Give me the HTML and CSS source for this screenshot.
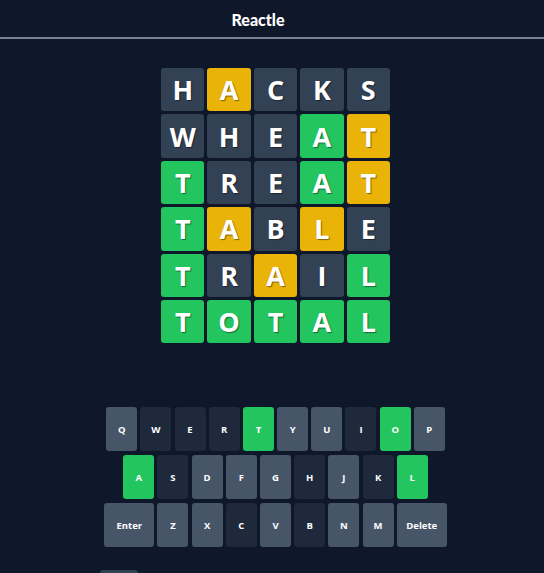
FILE: index.html
```html
<!DOCTYPE html>
<html lang="en">
<head>
<meta charset="utf-8">
<title>Reactle</title>
<link rel="stylesheet" href="styles.css">
</head>
<body>
<header class="header">
  <h1 class="title">Reactle</h1>
</header>
<main class="main">
  <div class="grid">
    <div class="tile absent">H</div><div class="tile present">A</div><div class="tile absent">C</div><div class="tile absent">K</div><div class="tile absent">S</div>
    <div class="tile absent">W</div><div class="tile absent">H</div><div class="tile absent">E</div><div class="tile correct">A</div><div class="tile present">T</div>
    <div class="tile correct">T</div><div class="tile absent">R</div><div class="tile absent">E</div><div class="tile correct">A</div><div class="tile present">T</div>
    <div class="tile correct">T</div><div class="tile present">A</div><div class="tile absent">B</div><div class="tile present">L</div><div class="tile absent">E</div>
    <div class="tile correct">T</div><div class="tile absent">R</div><div class="tile present">A</div><div class="tile absent">I</div><div class="tile correct">L</div>
    <div class="tile correct">T</div><div class="tile correct">O</div><div class="tile correct">T</div><div class="tile correct">A</div><div class="tile correct">L</div>
  </div>
  <div class="keyboard">
    <div class="krow">
      <button class="key">Q</button><button class="key used">W</button><button class="key used">E</button><button class="key used">R</button><button class="key hit">T</button><button class="key">Y</button><button class="key">U</button><button class="key used">I</button><button class="key hit">O</button><button class="key">P</button>
    </div>
    <div class="krow">
      <button class="key hit">A</button><button class="key used">S</button><button class="key">D</button><button class="key">F</button><button class="key">G</button><button class="key used">H</button><button class="key">J</button><button class="key used">K</button><button class="key hit">L</button>
    </div>
    <div class="krow">
      <button class="key wide">Enter</button><button class="key">Z</button><button class="key">X</button><button class="key used">C</button><button class="key">V</button><button class="key used">B</button><button class="key">N</button><button class="key">M</button><button class="key wide">Delete</button>
    </div>
  </div>
  <div class="footer">
    <div class="peek"></div>
  </div>
</main>
</body>
</html>
```
FILE: styles.css
```css
html {
  overflow: hidden;
}
body {
  margin: 0;
  background: #0f172a;
  font-family: Lato, "Open Sans", sans-serif;
  color: #ffffff;
}
.header {
  height: 37px;
  border-bottom: 2px solid #76839a;
  display: flex;
  align-items: center;
  justify-content: center;
  padding-right: 28px;
}
.title {
  margin: 0;
  font-size: 16px;
  font-weight: 900;
  line-height: 1;
  padding-top: 2px;
}
.main {
  display: flex;
  flex-direction: column;
  align-items: center;
  padding-left: 7px;
  padding-top: 29px;
}
.grid {
  display: grid;
  grid-template-columns: repeat(5, 43.4px);
  grid-auto-rows: 43.4px;
  column-gap: 3px;
  row-gap: 3px;
}
.tile {
  border-radius: 3px;
  display: flex;
  align-items: center;
  justify-content: center;
  font-size: 27px;
  font-weight: 700;
  font-family: "Open Sans", Lato, sans-serif;
  text-shadow: 1px 1px 1px rgba(0, 0, 0, 0.45);
}
.absent { background: #334155; }
.present { background: #eab308; }
.correct { background: #22c55e; }
.keyboard {
  margin-top: 64px;
  display: flex;
  flex-direction: column;
  gap: 4px;
}
.krow {
  display: flex;
  justify-content: center;
  gap: 3.2px;
}
.key {
  width: 31px;
  height: 44px;
  border: none;
  border-radius: 3px;
  background: #475569;
  color: #ffffff;
  font-family: "Open Sans", Lato, sans-serif;
  font-weight: 700;
  font-size: 9.5px;
  padding: 0;
}
.key.used { background: #1e293b; }
.key.hit { background: #22c55e; }
.key.wide { width: 50px; }
.footer {
  align-self: stretch;
  margin-top: 23px;
  padding-left: 93px;
}
.peek {
  width: 38px;
  height: 12px;
  border-radius: 3px 3px 0 0;
  background: #334155;
}
```
